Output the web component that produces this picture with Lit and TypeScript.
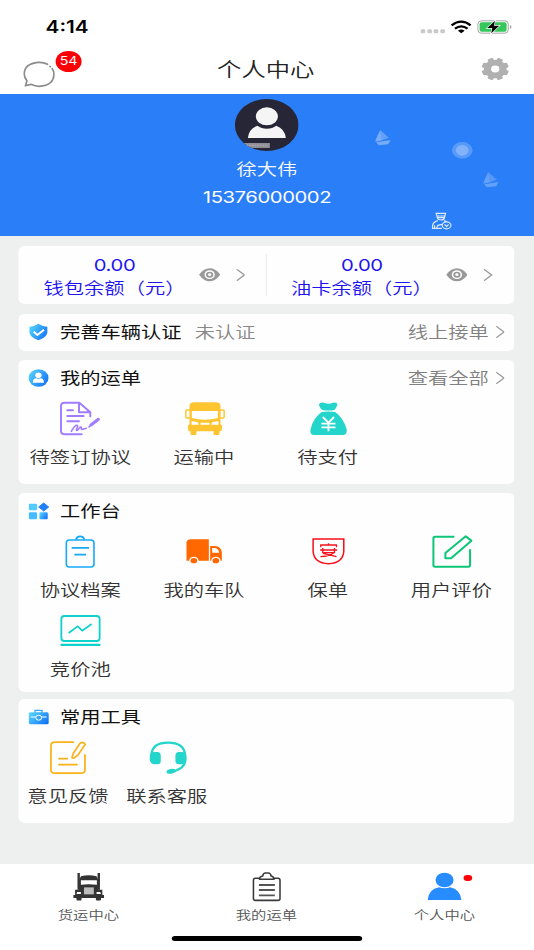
import { LitElement, html, svg, css, TemplateResult } from "lit";
import { customElement } from "lit/decorators.js";

// The interface is laid out on a 432px wide canvas and stretched to the 534px window.
const STRETCH = 534 / 432;

type Art = TemplateResult;

// box: viewBox of the artwork; w and h: size on screen after the stretch.
const icon = (box: string, w: number, h: number, art: Art) => html`<svg
  viewBox=${box}
  preserveAspectRatio="none"
  style="width:${(w / STRETCH).toFixed(2)}px;height:${h}px"
  aria-hidden="true"
>${art}</svg>`;

const chevron = () =>
  icon("0 0 27 36", 9, 12, svg`<path d="M2 1 L25 18 L2 35" fill="none" stroke="#999" stroke-width="4"/>`);

const eye = () =>
  icon("597 98 64 41", 21.3, 13.7, svg`
    <path d="M597 118 Q612 99 629 99 Q646 99 661 118 Q646 138 629 138 Q612 138 597 118Z" fill="#999"/>
    <ellipse cx="629" cy="118" rx="15.5" ry="13" fill="#fff"/>
    <ellipse cx="629" cy="118" rx="11" ry="9" fill="#999"/>
    <ellipse cx="629" cy="118" rx="5" ry="4" fill="#fff"/>`);

const gradient = (id: string) => svg`<defs><linearGradient id=${id} x1="0" y1="0.2" x2="1" y2="0.8">
  <stop offset="0" stop-color="#55d3ff"/><stop offset="1" stop-color="#1271f5"/></linearGradient></defs>`;

const shield = () => icon("85 258 62 60", 20.6, 20, svg`${gradient("g1")}
  <path d="M88 272 Q103 271 115 263 Q127 271 142 272 V290 Q139 304 115 313 Q91 304 88 290Z" fill="url(#g1)"/>
  <path d="M101 287 L112 297 L132 281" fill="none" stroke="#fff" stroke-width="6"/>`);

const person = () => icon("85 39 62 60", 20.6, 20, svg`${gradient("g2")}
  <ellipse cx="115.500" cy="69" rx="30" ry="26" fill="url(#g2)"/>
  <ellipse cx="115" cy="61" rx="9.500" ry="8.500" fill="#fff"/>
  <path d="M98 83 Q99 70 109 70 Q115 74 121 70 Q131 70 132 83Z" fill="#fff"/>`);

const blocks = () => icon("85 34 62 60", 20.6, 20, svg`${gradient("g3")}
  <rect x="86" y="42" width="25" height="20" rx="4" fill="#52ccff"/>
  <path d="M131 40 L146 52 L131 64 L116 52Z" fill="#1f80f8" stroke="#1f80f8" stroke-width="3" stroke-linejoin="round"/>
  <rect x="86" y="68" width="25" height="21" rx="4" fill="#45bcff"/>
  <rect x="118" y="68" width="25" height="21" rx="4" fill="url(#g3)"/>`);

const toolbox = () => icon("85 49 62 60", 20.6, 20, svg`${gradient("g4")}
  <path d="M105 66 V59 H126 V66" fill="none" stroke="#36a7ff" stroke-width="4"/>
  <rect x="86" y="65" width="60" height="36" rx="5" fill="url(#g4)"/>
  <path d="M92 79 H107 M125 79 H140" stroke="#fff" stroke-width="3"/>
  <ellipse cx="116" cy="81" rx="9" ry="7.500" fill="none" stroke="#fff" stroke-width="3"/>`);

const tile = (box: string, art: Art) => icon(box, 42, 35, art);

const agreement = () => tile("180 138 126 105", svg`<g fill="none" stroke="#a07cff" stroke-width="5.800" stroke-linecap="round" stroke-linejoin="round">
  <path d="M247 238 H197 Q185 238 185 228 V153 Q185 143 197 143 H240 L273 172 V184 M239 144 V172 H273"/>
  <path d="M204 166 H221 M204 183 H253 M204 199 H239"/>
  <path d="M216 229 C222 218 231 207 235 212 C237 216 227 226 233 226 C239 226 240 214 245 216 C248 218 243 225 250 223 L261 220" stroke-width="4.800"/>
  <path d="M275 210 L297 193" stroke-width="9.500"/><path d="M269 216 L275 210" stroke-width="5"/></g>`);

const bus = () => tile("551 138 126 105", svg`<g fill="#ffc531">
  <path d="M567 210 V153 Q567 142 581 142 H647 Q660 142 660 153 V210Z"/>
  <path d="M574 168 H652 V189 Q613 199 574 189Z" fill="#fff"/>
  <rect x="556" y="165" width="13" height="24" rx="3" fill="#fff" stroke="#ffc531" stroke-width="4.500"/>
  <rect x="658" y="165" width="13" height="24" rx="3" fill="#fff" stroke="#ffc531" stroke-width="4.500"/>
  <path d="M562 216 Q562 208 570 208 H657 Q665 208 665 216 Q665 222 662 229 H565 Q562 222 562 216Z"/>
  <rect x="570" y="227" width="18" height="13" rx="3"/><rect x="639" y="227" width="18" height="13" rx="3"/>
  <path d="M573 198 L592 202 L595 209 H573Z M654 198 L635 202 L632 209 H654Z M600 203 H627 V209 H600Z" fill="#fff"/></g>`);

const moneyBag = () => tile("121 138 126 105", svg`<g fill="#24d5cb">
  <path d="M154 149 Q158 140 170 143 Q183 149 196 143 Q209 140 210 149 Q206 159 201 165 Q183 168 164 165 Q158 159 154 149Z"/>
  <path d="M163 171 Q183 168 203 171 Q228 188 238 224 Q239 240 226 240 H140 Q127 240 129 224 Q137 188 163 171Z"/>
  <path d="M166 186 L183 203 L200 186 M183 203 V229 M162 206 H204 M162 217 H204" fill="none" stroke="#fff" stroke-width="5.500"/></g>`);

const clipboard = () => tile("179 134 126 105", svg`<g fill="none" stroke="#16a9f8" stroke-width="4.800">
  <rect x="200" y="152" width="83" height="81" rx="9"/>
  <path d="M229 151 Q231 141 241 141 Q252 141 254 151" stroke-width="5.500"/>
  <path d="M216 175.500 H268 M224 196 H259"/></g>`);

const truck = () => tile("552 134 126 105", svg`<g fill="#ff6700">
  <path d="M559 214 V159 Q561 150 571 150 H626 V214Z"/>
  <path d="M630 170 H645 Q662 171 665 188 V214 H630Z"/>
  <path d="M636 176 H645 Q655 178 657 190 H636Z" fill="#fff"/>
  <ellipse cx="581" cy="213" rx="14" ry="11" fill="#fff"/><ellipse cx="647" cy="213" rx="14" ry="11" fill="#fff"/>
  <ellipse cx="581" cy="214" rx="10" ry="8"/><ellipse cx="647" cy="214" rx="10" ry="8"/></g>`);

const policy = () => tile("121 134 126 105", svg`<g fill="none" stroke="#f5101c" stroke-width="4.600">
  <path d="M137 149 H229 V185 Q227 222 183 223 Q139 222 137 185Z"/>
  <path d="M183 162 V168 M160 174 V167 H207 V174 M158 182 H209 M166 176 V190 H201 V176 M159 202 Q188 200 199 190 M167 192 L207 202" stroke-width="4"/></g>`);

const review = () => tile("491 134 126 105", svg`<g fill="none" stroke="#0cc678" stroke-width="6">
  <path d="M560 142.500 H502 Q497 142.500 497 147 V227 Q497 232 502 232 H602 Q607 232 607 227 V180"/>
  <path d="M533 207 V191 L594 141 L611 154 L550 207Z" stroke-linejoin="round"/></g>`);

const auction = () => tile("179 372 126 105", svg`<g fill="none" stroke="#11d1cc" stroke-width="5.500">
  <rect x="185" y="381" width="115" height="75" rx="9"/>
  <path d="M185 467.500 H300" stroke-width="6.500" stroke-linecap="round"/>
  <path d="M207 432 L234 412 L248 425 L276 405"/></g>`);

const feedback = () => tile("141 149 126 105", svg`<g fill="none" stroke="#fbb21a" stroke-width="5.300" stroke-linecap="round">
  <path d="M220 155.500 H165 Q153 155.500 153 166 V238 Q153 248.500 165 248.500 H243 Q255 248.500 255 238 V194"/>
  <path d="M177 205 H202 M177 223 H231"/>
  <path d="M216 202 L220 189 L241 158 Q249 153 256 162 L234 194 L221 204Z" stroke-linejoin="round" stroke-width="5"/></g>`);

const headset = () => tile("439 149 126 105", svg`<g fill="#24d5cb">
  <path d="M452 194 Q454 157 502 157 Q550 157 553 194 V212 Q552 232 522 242" fill="none" stroke="#24d5cb" stroke-width="7"/>
  <path d="M447 199 Q447 185 462 185 H470 Q480 186 480 196 V212 Q480 222 470 222 H462 Q448 222 447 207Z"/>
  <path d="M557 199 Q557 185 542 185 H534 Q524 186 524 196 V212 Q524 222 534 222 H542 Q557 222 557 207Z"/>
  <ellipse cx="511" cy="243" rx="14" ry="7" transform="rotate(-10 511 243)"/></g>`);

const tabIcon = (box: string, art: Art) => icon(box, 34.06, 31.4, art);

const lorry = () => tabIcon("212 48 100 94", svg`<g fill="#333">
  <path d="M229 54 H236 V104 H229Z M288 54 H295 V104 H288Z"/>
  <path d="M239 64 Q262 57 285 64 L290 75 V122 H234 V75Z"/>
  <path d="M239 76 H286 V89 Q262 86 239 89Z" fill="#fff"/>
  <path d="M222 104 H235 L240 98 H284 L290 104 H302 V120 H307 V129 H217 V120 H222Z"/>
  <rect x="226" y="127" width="15" height="9" rx="3"/><rect x="283" y="127" width="15" height="9" rx="3"/>
  <path d="M228 111 H239 V117 H226Z M285 111 H296 L298 117 H285Z" fill="#fff"/>
  <rect x="248" y="97" width="29" height="21" fill="#bbb"/></g>`);

const orders = () => tabIcon("734 48 100 94", svg`<g fill="none" stroke="#3a3a3a" stroke-width="4.600">
  <rect x="745" y="70" width="78" height="66" rx="6"/>
  <path d="M763 73 Q763 64 772 63 Q774 54 780 54 H789 Q795 54 797 63 Q805 64 805 73Z" fill="#fff"/>
  <path d="M761 90 H808 M761 105 H808 M761 121 H808" stroke="#555" stroke-width="5.500"/></g>`);

const profile = () => tabIcon("1257 48 100 94", svg`<g fill="#268cff">
  <ellipse cx="1306.500" cy="75" rx="26.500" ry="22"/>
  <path d="M1257 135 Q1259 103 1290 97 Q1306 103 1323 97 Q1353 103 1356 135Z"/></g>`);

const signals = () => icon("460 55 276 45", 92, 15, svg`
  <g fill="#c9c9c9"><rect x="461" y="86" width="14" height="12" rx="4"/><rect x="481" y="86" width="14" height="12" rx="4"/>
  <rect x="500" y="86" width="14" height="12" rx="4"/><rect x="520" y="86" width="14" height="12" rx="4"/></g>
  <g fill="none" stroke="#000" stroke-width="7"><path d="M554 74 Q583 52 611 74"/><path d="M564 84 Q583 70 602 84"/></g>
  <path d="M573 90 Q583 83 593 90 L583 98Z"/>
  <rect x="633" y="60.500" width="91" height="37" rx="10" fill="#fff" stroke="#a6a6a6" stroke-width="3"/>
  <rect x="638" y="65" width="81" height="28" rx="6" fill="#34c759"/>
  <path d="M729 73 Q734 75 734 79 Q734 83 729 85Z" fill="#a6a6a6"/>
  <path d="M684 60 L661 82 H676 L673 98 L697 75 H681Z" stroke="#fff" stroke-width="4" paint-order="stroke"/>`);

const bubble = () => icon("66 180 102 84", 34, 28, svg`<g fill="none" stroke="#8c8c8c" stroke-width="5" stroke-linecap="round">
  <path d="M142 193 Q129 186 114 187 Q72 191 72 222 Q72 233 80 242 L76 257 L92 253 Q104 259 117 259 Q161 256 161 222 Q161 213 156 206"/>
  <path d="M149 199 L150 200"/></g>`);

const gear = () => {
  const teeth = [0, 45, 90, 135].map(
    (a) => svg`<rect x="-9" y="-41" width="18" height="82" rx="4" transform="rotate(${a + 22.5})"/>`
  );
  return icon("640 171 86 72", 28.7, 24, svg`<g transform="translate(683 207) scale(1 .82)" fill="#b0b0b0">
    <circle r="34"/>${teeth}<circle r="12.500" fill="#fff"/></g>`);
};

const avatar = () => icon("165 27 191 156", 63.7, 52, svg`
  <clipPath id="face"><ellipse cx="260.500" cy="105" rx="95.500" ry="78"/></clipPath>
  <g clip-path="url(#face)"><rect x="165" y="27" width="191" height="156" fill="#262637"/>
  <ellipse cx="261" cy="79" rx="33" ry="27" fill="#f5f5f5"/>
  <path d="M204 144 Q207 116 233 107 Q244 116 261 116 Q278 116 289 107 Q315 116 318 144Z" fill="#f5f5f5"/>
  <rect x="190" y="159" width="80" height="15" fill="#8e8e94"/>
  <path d="M200 166 H266" stroke="#a9a9ad" stroke-width="4" stroke-dasharray="5 3"/></g>`);

const boat = (x: number, y: number, o: number) => svg`<g transform="translate(${x} ${y})" fill="#fff" opacity=${o}>
  <path d="M14 0 L0 30 V35 L20 31Z"/><path d="M14 0 L40 23 L20 31Z" opacity=".75"/>
  <path d="M2 37 L45 30 L38 43 L10 46Z"/></g>`;

const scenery = () => icon("60 50 380 320", 126.7, 106.7, svg`
  ${boat(63, 59, 0.36)}${boat(387, 185, 0.27)}
  <ellipse cx="323" cy="120" rx="31" ry="25" fill="#fff" opacity=".22"/>
  <ellipse cx="323" cy="120" rx="19" ry="16" fill="#fff" opacity=".25"/>
  <g fill="none" stroke="#dceaff" stroke-width="3.600">
    <path d="M245 309 H273 L271 317 H247Z M248 317 V322 Q250 329 259 329 Q269 329 270 322 V317 M249 322 H270"/>
    <path d="M250 331 Q234 335 234 348 V354 H262 M240 354 V345 M246 354 L250 345 L262 342 M268 331 L276 334"/>
    <ellipse cx="276" cy="345" rx="13" ry="10.500"/><path d="M270 342 L276 349 L282 342"/></g>`);

interface Entry { label: string; art: () => Art }

const waybills: Entry[] = [
  { label: "待签订协议", art: agreement },
  { label: "运输中", art: bus },
  { label: "待支付", art: moneyBag },
];
const workbench: Entry[] = [
  { label: "协议档案", art: clipboard },
  { label: "我的车队", art: truck },
  { label: "保单", art: policy },
  { label: "用户评价", art: review },
  { label: "竞价池", art: auction },
];
const tools: Entry[] = [
  { label: "意见反馈", art: feedback },
  { label: "联系客服", art: headset },
];

@customElement("app-root")
export class AppRoot extends LitElement {
  static styles = css`
    :host { display: block; width: 534px; height: 950px; overflow: hidden; background: #fff; }
    * { box-sizing: border-box; }
    svg { display: block; flex: none; }
    .screen {
      width: 432px; height: 950px; display: flex; flex-direction: column;
      transform: scaleX(1.23611); transform-origin: 0 0;
      background: #eef0f0; color: #333;
      font: 16.4px/24px "Noto Sans CJK SC", sans-serif; font-weight: 350;
      white-space: nowrap;
    }
    .status { height: 52px; padding: 1px 18px 0 36.900px; display: flex; align-items: center; justify-content: space-between; background: #fff; }
    .time { font: 600 16.800px/20px Inter, sans-serif; color: #000; }
    .nav { height: 42px; padding: 0 20px 0 18px; display: grid; grid-template-columns: 1fr auto 1fr; align-items: start; background: #fff; }
    .title { margin-top: 5px; font-size: 19.7px; color: #222; }
    .messages { position: relative; justify-self: start; margin-top: 8px; }
    .badge {
      position: absolute; left: 27px; top: -9.500px; width: 21px; height: 21.500px; border-radius: 50%;
      background: #fd0005; color: #fff; font: 11.500px/21.500px Inter, sans-serif; text-align: center;
    }
    .settings { justify-self: end; margin-top: 5px; }
    .hero { position: relative; height: 142px; padding-top: 5px; background: #2a7ef8; color: #fff; display: flex; flex-direction: column; align-items: center; }
    .name { margin-top: 4.500px; }
    .phone { margin-top: 5px; font: 16.4px/24px Inter, sans-serif; letter-spacing: -0.35px; }
    .scenery { position: absolute; left: 302.500px; top: 32.500px; }
    .body { flex: 1; padding: 10px 16.300px 0 15.400px; display: flex; flex-direction: column; }
    .card { background: #fefefe; border-radius: 5px; }
    .balances { height: 58px; display: flex; align-items: center; }
    .balance { flex: 1; display: flex; align-items: center; }
    .balance + .balance { box-shadow: -1px 0 #eee; height: 42px; }
    .sum { width: 154.500px; padding-top: 3px; text-align: center; color: #1c12f2; line-height: 23.500px; }
    .amount { position: relative; top: 0.800px; font: 16.4px/23.500px Inter, sans-serif; letter-spacing: -0.3px; }
    .label { position: relative; top: -0.600px; }
    .balance .more { margin-left: 13px; }
    .balance .look { margin-left: -9px; }
    .certify { height: 37.500px; margin-top: 9.500px; }
    .orders { height: 124px; margin-top: 9px; }
    .work { height: 198.500px; margin-top: 9px; }
    .tools { height: 124px; margin-top: 7.500px; }
    .head { height: 36px; padding: 0 7.500px 0 7.500px; display: flex; align-items: center; color: #111; font-weight: 400; }
    .head span { padding-bottom: 2px; }
    .head .caption { margin-left: 9px; }
    .head .state { margin-left: 10.600px; color: #888; font-weight: 350; }
    .link { margin-left: auto; display: flex; align-items: center; gap: 5.500px; color: #808080; font-weight: 350; }
    .grid { margin-top: 5px; display: grid; grid-template-columns: repeat(4, 1fr); row-gap: 12.500px; }
    .five { grid-template-columns: repeat(5, 1fr); }
    .entry { display: flex; flex-direction: column; align-items: center; gap: 7.600px; min-width: 0; }
    .entry span { margin-left: -1px; }
    .tabs { position: relative; height: 86px; padding-top: 7px; display: grid; grid-template-columns: repeat(3, 1fr); background: #fff; }
    .tab { position: relative; display: flex; flex-direction: column; align-items: center; gap: 3px; font-size: 12.400px; line-height: 20px; color: #555; }
    .tab span { margin-left: -1px; }
    .dot { position: absolute; left: 87px; top: 3.500px; width: 6.500px; height: 6.500px; border-radius: 50%; background: #fd0005; }
    .home { position: absolute; left: 139px; bottom: 9px; width: 154px; height: 5.200px; border-radius: 3px; background: #000; }
  `;

  private entries(list: Entry[], five = false) {
    return html`<div class="grid ${five ? "five" : ""}">
      ${list.map((e) => html`<div class="entry">${e.art()}<span>${e.label}</span></div>`)}
    </div>`;
  }

  private head(art: Art, caption: string, link = "", state = "") {
    return html`<div class="head">
      ${art}<span class="caption">${caption}</span>
      ${state ? html`<span class="state">${state}</span>` : ""}
      ${link ? html`<div class="link"><span>${link}</span>${chevron()}</div>` : ""}
    </div>`;
  }

  private balance(label: string) {
    return html`<div class="balance">
      <div class="sum"><div class="amount">0.00</div><div class="label">${label}</div></div>
      <div class="look">${eye()}</div><div class="more">${chevron()}</div>
    </div>`;
  }

  render() {
    return html`<div class="screen">
      <div class="status"><span class="time">4:14</span>${signals()}</div>
      <div class="nav">
        <div class="messages">${bubble()}<span class="badge">54</span></div>
        <span class="title">个人中心</span>
        <div class="settings">${gear()}</div>
      </div>
      <div class="hero">
        <div class="scenery">${scenery()}</div>
        ${avatar()}
        <div class="name">徐大伟</div>
        <div class="phone">15376000002</div>
      </div>
      <div class="body">
        <div class="card balances">${this.balance("钱包余额（元）")}${this.balance("油卡余额（元）")}</div>
        <div class="card certify">${this.head(shield(), "完善车辆认证", "线上接单", "未认证")}</div>
        <div class="card orders">${this.head(person(), "我的运单", "查看全部")}${this.entries(waybills)}</div>
        <div class="card work">${this.head(blocks(), "工作台")}${this.entries(workbench)}</div>
        <div class="card tools">${this.head(toolbox(), "常用工具")}${this.entries(tools, true)}</div>
      </div>
      <div class="tabs">
        <div class="tab">${lorry()}<span>货运中心</span></div>
        <div class="tab">${orders()}<span>我的运单</span></div>
        <div class="tab">${profile()}<span>个人中心</span><i class="dot"></i></div>
        <div class="home"></div>
      </div>
    </div>`;
  }
}
